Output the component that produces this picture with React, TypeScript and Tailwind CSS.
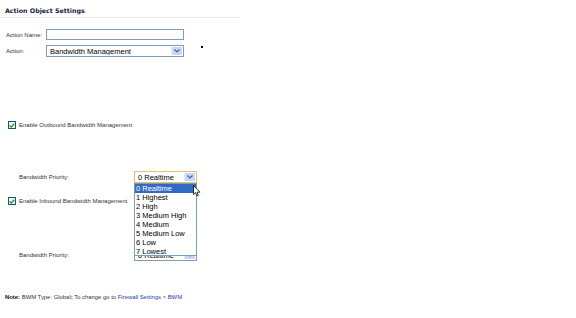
import type { ReactNode } from 'react';

const priorities = ['0 Realtime', '1 Highest', '2 High', '3 Medium High', '4 Medium', '5 Medium Low', '6 Low', '7 Lowest'];

function Arrow() {
  return (
    <div className="flex h-full w-[11px] items-center justify-center bg-[#c6d6f7] border-l border-[#e4ecfd]">
      <svg width="6" height="4" viewBox="0 0 6 4">
        <path d="M0.5 0.5 L3 3 L5.5 0.5" stroke="#4d6185" strokeWidth="1.2" fill="none" />
      </svg>
    </div>
  );
}

function Select({ value, width, focused }: { value: string; width: string; focused?: boolean }) {
  return (
    <div
      className={`flex h-[12px] items-stretch border bg-white p-px ${width} ${focused ? 'border-[#e3c06a]' : 'border-[#7f9db9]'}`}
    >
      <span className="flex-1 truncate pl-[2px] text-[7.5px] leading-[9px] text-black">{value}</span>
      <Arrow />
    </div>
  );
}

function Checkbox() {
  return (
    <div className="flex h-[8px] w-[8px] items-center justify-center border border-[#1c5180] bg-[#f4f4f0]">
      <svg width="6" height="5" viewBox="0 0 6 5">
        <path d="M0.6 2.4 L2.2 4 L5.4 0.8" stroke="#21a121" strokeWidth="1.3" fill="none" />
      </svg>
    </div>
  );
}

function Label({ children, className = '' }: { children: ReactNode; className?: string }) {
  return <span className={`text-[6px] leading-[8px] text-[#333] ${className}`}>{children}</span>;
}

export default function App() {
  return (
    <div className="relative h-[318px] w-[576px] overflow-hidden bg-white font-['Liberation_Sans',Arial,sans-serif]">
      {/* header */}
      <div className="w-[240px] border-b border-[#ebebeb] pb-[2px] pl-[5px] pt-[7px]">
        <h1 className="font-['DejaVu_Sans',Verdana,sans-serif] text-[6.3px] font-bold leading-[8px] text-[#14213d]">
          Action Object Settings
        </h1>
      </div>

      {/* name / action */}
      <div className="mt-[11px] flex items-center pl-[6px]">
        <Label className="w-[40px]">Action Name:</Label>
        <div className="h-[11px] w-[138px] border border-[#7f9db9] bg-white" />
      </div>
      <div className="mt-[5px] flex items-center pl-[6px]">
        <Label className="w-[40px]">Action:</Label>
        <Select value="Bandwidth Management" width="w-[138px]" />
        <div className="ml-[17px] -mt-[8px] h-[2px] w-[2px] bg-black" />
      </div>

      {/* outbound */}
      <div className="mt-[64px] flex items-center gap-[3px] pl-[8px]">
        <Checkbox />
        <Label>Enable Outbound Bandwidth Management</Label>
      </div>
      <div className="mt-[42px] flex items-center pl-[19px]">
        <Label className="w-[115px]">Bandwidth Priority:</Label>
        <Select value="0 Realtime" width="w-[63px]" focused />
      </div>

      {/* inbound */}
      <div className="mt-[14px] flex items-center gap-[3px] pl-[8px]">
        <Checkbox />
        <Label>Enable Inbound Bandwidth Management</Label>
      </div>
      <div className="mt-[44px] flex items-center pl-[19px]">
        <Label className="w-[115px]">Bandwidth Priority:</Label>
        <Select value="0 Realtime" width="w-[63px]" />
      </div>

      {/* note */}
      <div className="mt-[32px] pl-[5px] text-[5.9px] leading-[8px] text-[#333]">
        <b className="text-[#111]">Note:</b> BWM Type: Global<b>;</b> To change go to{' '}
        <span className="text-[#1e3e9e]">Firewall Settings &gt; BWM</span>
      </div>

      {/* open dropdown list */}
      <div className="absolute left-[134px] top-[183px] h-[73px] w-[63px] border border-[#7f9db9] bg-white">
        {priorities.map((p, i) => (
          <div
            key={p}
            className={`h-[9px] pl-[1px] text-[7.5px] leading-[9px] ${i === 0 ? 'bg-[#316ac5] text-white' : 'text-black'}`}
          >
            {p}
          </div>
        ))}
      </div>

      {/* mouse cursor */}
      <svg className="absolute left-[193px] top-[185px]" width="8" height="12" viewBox="0 0 8 12">
        <path d="M0.5 0.5 L0.5 9.5 L2.6 7.6 L4 11 L5.4 10.4 L4 7.2 L7 7.2 Z" fill="white" stroke="black" strokeWidth="0.8" />
      </svg>
    </div>
  );
}
